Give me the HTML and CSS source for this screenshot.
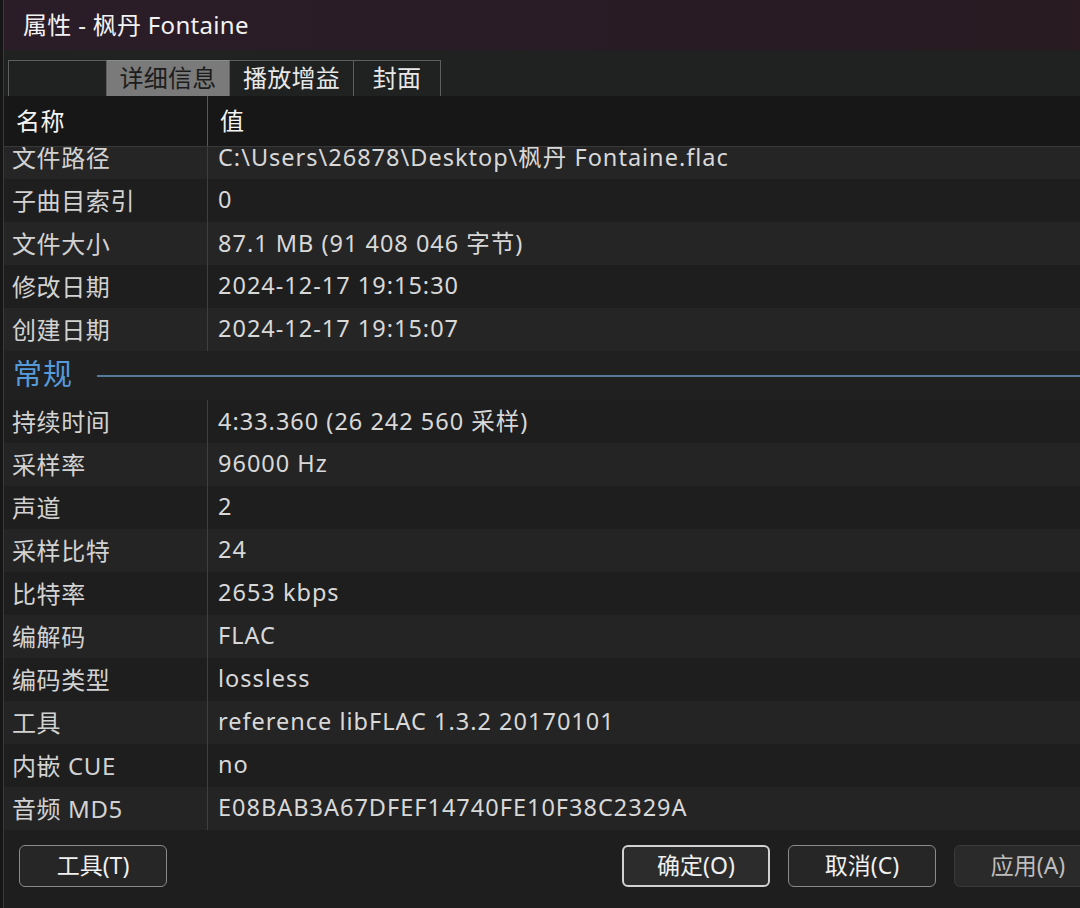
FILE: index.html
```html
<!DOCTYPE html>
<html lang="zh-CN">
<head>
<meta charset="utf-8">
<title>属性 - 枫丹 Fontaine</title>
<link rel="stylesheet" href="styles.css">
</head>
<body>
<div class="window">
  <div class="titlebar">属性 - 枫丹 Fontaine</div>

  <div class="tabstrip">
    <div class="tab tab-blank"></div>
    <div class="tab tab-active">详细信息</div>
    <div class="tab">播放增益</div>
    <div class="tab">封面</div>
  </div>

  <div class="list">
    <div class="list-head">
      <div class="cell-name">名称</div>
      <div class="cell-value">值</div>
    </div>

    <div class="list-body">
      <div class="list-scroll">
        <div class="group group-file">
          <div class="row"><div class="cell-name">文件路径</div><div class="cell-value">C:\Users\26878\Desktop\枫丹 Fontaine.flac</div></div>
          <div class="row"><div class="cell-name">子曲目索引</div><div class="cell-value">0</div></div>
          <div class="row"><div class="cell-name">文件大小</div><div class="cell-value">87.1 MB (91 408 046 字节)</div></div>
          <div class="row"><div class="cell-name">修改日期</div><div class="cell-value">2024-12-17 19:15:30</div></div>
          <div class="row"><div class="cell-name">创建日期</div><div class="cell-value">2024-12-17 19:15:07</div></div>
        </div>

        <div class="section">
          <span class="section-title">常规</span>
          <span class="section-rule"></span>
        </div>

        <div class="group group-general">
          <div class="row"><div class="cell-name">持续时间</div><div class="cell-value">4:33.360 (26 242 560 采样)</div></div>
          <div class="row"><div class="cell-name">采样率</div><div class="cell-value">96000 Hz</div></div>
          <div class="row"><div class="cell-name">声道</div><div class="cell-value">2</div></div>
          <div class="row"><div class="cell-name">采样比特</div><div class="cell-value">24</div></div>
          <div class="row"><div class="cell-name">比特率</div><div class="cell-value">2653 kbps</div></div>
          <div class="row"><div class="cell-name">编解码</div><div class="cell-value">FLAC</div></div>
          <div class="row"><div class="cell-name">编码类型</div><div class="cell-value">lossless</div></div>
          <div class="row"><div class="cell-name">工具</div><div class="cell-value">reference libFLAC 1.3.2 20170101</div></div>
          <div class="row"><div class="cell-name">内嵌 CUE</div><div class="cell-value">no</div></div>
          <div class="row"><div class="cell-name">音频 MD5</div><div class="cell-value">E08BAB3A67DFEF14740FE10F38C2329A</div></div>
        </div>
      </div>
    </div>
  </div>

  <div class="footer">
    <button class="btn">工具(T)</button>
    <div class="footer-spacer"></div>
    <div class="btn-group">
      <button class="btn btn-default">确定(O)</button>
      <button class="btn">取消(C)</button>
      <button class="btn btn-disabled">应用(A)</button>
    </div>
  </div>
</div>
</body>
</html>
```

FILE: styles.css
```css
* {
  box-sizing: border-box;
}

html, body {
  margin: 0;
  height: 100%;
  overflow: hidden;
  background: #161616;
}

body {
  font-family: "Noto Sans", "Noto Sans CJK SC", sans-serif;
  color: #d4d4d4;
}

/* Dialog window; it is wider than the visible area, so the right edge is cut off */
.window {
  margin-left: 3px;
  width: 1113px;
  height: 908px;
  border-left: 1px solid #3b3b3b;
  background: #1f1f1f;
  display: flex;
  flex-direction: column;
}

/* Title bar */
.titlebar {
  height: 50px;
  flex: none;
  display: flex;
  align-items: center;
  padding-left: 19px;
  padding-bottom: 3px;
  background: linear-gradient(90deg, #2b1d28 0%, #281b24 60%, #2a1b22 100%);
  color: #f2f2f2;
  font-size: 24px;
  letter-spacing: 0.3px;
}

/* Tab strip */
.tabstrip {
  height: 46px;
  flex: none;
  display: flex;
  align-items: flex-end;
  padding-left: 4px;
  background: #202221;
}

.tab {
  height: 36px;
  display: flex;
  align-items: center;
  justify-content: center;
  font-size: 24px;
  line-height: 1;
  color: #e8e8e8;
  border-top: 1px solid #5e5e5e;
  border-right: 1px solid #5e5e5e;
  padding-bottom: 1px;
  letter-spacing: 0.3px;
}

.tab-blank {
  width: 99px;
  border-left: 1px solid #5e5e5e;
}

.tab-active {
  width: 123px;
  background: #7a7a7a;
  color: #1c1c1c;
  border-top-color: #8a8a8a;
}

.tab:nth-child(3) {
  width: 124px;
}

.tab:nth-child(4) {
  width: 87px;
}

/* Property list */
.list {
  flex: none;
  display: flex;
  flex-direction: column;
}

.list-head {
  height: 51px;
  flex: none;
  display: flex;
  background: #171717;
  border-bottom: 1px solid #383838;
  color: #f4f4f4;
  font-size: 24px;
}

.list-head .cell-name {
  padding-left: 12px;
  padding-bottom: 3px;
  color: #f4f4f4;
}

.list-head .cell-value {
  padding-left: 12px;
  padding-bottom: 3px;
  border-left-color: #595959;
  font-size: 24px;
  color: #f4f4f4;
}

.cell-name {
  width: 203px;
  flex: none;
  display: flex;
  align-items: center;
  padding-left: 8px;
  padding-bottom: 3px;
  white-space: nowrap;
  font-size: 24px;
  letter-spacing: 0.6px;
  color: #d2d2d2;
}

.cell-value {
  flex: 1;
  display: flex;
  align-items: center;
  padding-left: 10px;
  padding-bottom: 3px;
  border-left: 1px solid #3f3f3f;
  white-space: nowrap;
  font-size: 23.5px;
  letter-spacing: 1px;
  color: #d8d8d8;
}

.list-body {
  height: 683px;
  overflow: hidden;
}

/* the list is scrolled down a little, so the first row is partly hidden */
.list-scroll {
  margin-top: -11px;
}

.row {
  height: 43px;
  display: flex;
  background: #1e1e1e;
}

.group-file .row:nth-child(odd) {
  background: #252525;
}

.group-general .row:nth-child(even) {
  background: #242424;
}

/* Group heading with a rule */
.section {
  height: 49px;
  display: flex;
  align-items: center;
  padding-left: 9px;
  background: #202020;
}

.section-title {
  font-size: 29px;
  color: #559ad9;
  line-height: 1;
  padding-bottom: 4px;
  letter-spacing: 1px;
}

.section-rule {
  flex: 1;
  height: 2px;
  margin-left: 24px;
  background: #55799b;
}

/* Footer buttons */
.footer {
  flex: 1;
  display: flex;
  align-items: flex-start;
  padding: 15px 14px 0 15px;
  background: #1e1e1e;
}

.footer-spacer {
  flex: 1;
}

.btn-group {
  display: flex;
  gap: 18px;
}

.btn {
  width: 148px;
  height: 42px;
  border: 1px solid #8a8a8a;
  border-radius: 6px;
  background: #262626;
  color: #f0f0f0;
  font-family: inherit;
  font-size: 23px;
  line-height: 1;
  padding: 0 0 2px;
  display: flex;
  align-items: center;
  justify-content: center;
}

.btn-default {
  border: 2px solid #d2d2d2;
  background: #2c2c2c;
}

.btn-disabled {
  border-color: #3a3a3a;
  background: #2a2a2a;
  color: #bdbdbd;
}
```
